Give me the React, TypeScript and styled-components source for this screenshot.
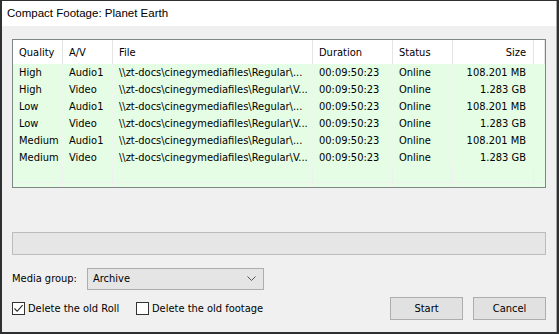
import React from "react";
import styled, { createGlobalStyle } from "styled-components";

const GlobalStyle = createGlobalStyle`
  *, *::before, *::after {
    box-sizing: border-box;
  }
  html, body {
    margin: 0;
    padding: 0;
    background: #2e3032;
  }
  body {
    width: 559px;
    height: 334px;
    overflow: hidden;
  }
`;

const Window = styled.div`
  margin: 1px 0 0 2px;
  width: 555px;
  height: 331px;
  background: #f0f0f0;
  border-right: 1px solid #a8a8a8;
  display: flex;
  flex-direction: column;
  font-family: "DejaVu Sans Condensed", "DejaVu Sans", sans-serif;
  font-stretch: condensed;
  font-size: 11px;
  color: #000;
`;

const TitleBar = styled.div`
  height: 25px;
  background: #fff;
  display: flex;
  align-items: center;
  padding: 0 0 1px 5px;
  font-family: "Liberation Sans", Arial, sans-serif;
  font-stretch: normal;
  font-size: 11.5px;
  color: #000;
`;

const Body = styled.div`
  flex: 1;
  padding: 13px 0 0 10px;
  display: flex;
  flex-direction: column;
  align-items: flex-start;
`;

const ListBox = styled.div`
  width: 534px;
  height: 149px;
  border: 1px solid #7f8688;
  background: #e4fde4;
  overflow: hidden;
`;

const Grid = styled.div`
  display: grid;
  grid-template-columns: 50px 50px 200px 80px 60px 81px 1fr;
`;

const HeadCell = styled.div<{ $right?: boolean }>`
  height: 24px;
  background: #fff;
  border-right: 1px solid #e5e5e5;
  display: flex;
  align-items: center;
  justify-content: ${(p) => (p.$right ? "flex-end" : "flex-start")};
  padding: 0 ${(p) => (p.$right ? "7px" : "0")} 0 ${(p) => (p.$right ? "0" : "6px")};
  white-space: nowrap;
  &:last-child {
    border-right: none;
  }
`;

const Cell = styled.div<{ $right?: boolean; $filler?: boolean }>`
  height: 17px;
  display: flex;
  align-items: center;
  justify-content: ${(p) => (p.$right ? "flex-end" : "flex-start")};
  padding: 0 ${(p) => (p.$right ? "7px" : "0")} 0 ${(p) => (p.$right ? "0" : "6px")};
  white-space: nowrap;
  overflow: hidden;
  border-right: 1px solid ${(p) => (p.$filler ? "#f0f0f0" : "#eef7ee")};
  border-bottom: ${(p) => (p.$filler ? "1px solid #f0f0f0" : "none")};
  &:nth-child(7n) {
    border-right: none;
  }
`;

const Progress = styled.div`
  width: 534px;
  margin-top: 44px;
  height: 23px;
  border: 1px solid #bcbcbc;
  background: #e6e6e6;
`;

const GroupRow = styled.div`
  margin-top: 13px;
  display: flex;
  align-items: center;
`;

const GroupLabel = styled.span`
  width: 75px;
  padding-bottom: 1px;
`;

const Combo = styled.div`
  width: 177px;
  height: 22px;
  border: 1px solid #adadad;
  background: #e5e5e5;
  display: flex;
  align-items: center;
  justify-content: space-between;
  padding: 0 7px 1px 5px;
`;

const BottomRow = styled.div`
  width: 534px;
  margin-top: 7px;
  display: flex;
  align-items: center;
  justify-content: space-between;
`;

const Checks = styled.div`
  display: flex;
  align-items: center;
`;

const CheckLabel = styled.label<{ $width?: number }>`
  display: flex;
  align-items: center;
  gap: 3px;
  width: ${(p) => (p.$width ? `${p.$width}px` : "auto")};
`;

const Box = styled.span`
  width: 13px;
  height: 13px;
  border: 1px solid #333;
  background: #fff;
  display: flex;
  align-items: center;
  justify-content: center;
`;

const Buttons = styled.div`
  display: flex;
  gap: 10px;
`;

const Button = styled.button`
  width: 73px;
  height: 23px;
  border: 1px solid #adadad;
  background: #e1e1e1;
  font: inherit;
  font-stretch: condensed;
  color: #000;
  padding: 0 0 1px;
`;

const columns = [
  { title: "Quality" },
  { title: "A/V" },
  { title: "File" },
  { title: "Duration" },
  { title: "Status" },
  { title: "Size", right: true },
  { title: "" },
];

const rows = [
  ["High", "Audio1", "\\\\zt-docs\\cinegymediafiles\\Regular\\...", "00:09:50:23", "Online", "108.201 MB"],
  ["High", "Video", "\\\\zt-docs\\cinegymediafiles\\Regular\\V...", "00:09:50:23", "Online", "1.283 GB"],
  ["Low", "Audio1", "\\\\zt-docs\\cinegymediafiles\\Regular\\...", "00:09:50:23", "Online", "108.201 MB"],
  ["Low", "Video", "\\\\zt-docs\\cinegymediafiles\\Regular\\V...", "00:09:50:23", "Online", "1.283 GB"],
  ["Medium", "Audio1", "\\\\zt-docs\\cinegymediafiles\\Regular\\...", "00:09:50:23", "Online", "108.201 MB"],
  ["Medium", "Video", "\\\\zt-docs\\cinegymediafiles\\Regular\\V...", "00:09:50:23", "Online", "1.283 GB"],
];

const Check = ({ checked, label, width }: { checked?: boolean; label: string; width?: number }) => (
  <CheckLabel $width={width}>
    <Box>
      {checked && (
        <svg width="11" height="11" viewBox="0 0 11 11">
          <polyline points="1.5,5.5 4.2,8.3 9.6,2.2" fill="none" stroke="#222" strokeWidth="1.1" />
        </svg>
      )}
    </Box>
    {label}
  </CheckLabel>
);

const App = () => {
  return (
    <>
      <GlobalStyle />
      <Window>
        <TitleBar>Compact Footage: Planet Earth</TitleBar>
        <Body>
          <ListBox>
            <Grid>
              {columns.map((c, i) => (
                <HeadCell key={i} $right={c.right}>
                  {c.title}
                </HeadCell>
              ))}
              {rows.map((r, ri) =>
                [...r, ""].map((v, ci) => (
                  <Cell key={`${ri}-${ci}`} $right={ci === 5}>
                    {v}
                  </Cell>
                ))
              )}
              {columns.map((_, ci) => (
                <Cell key={`f-${ci}`} $filler />
              ))}
              {columns.map((_, ci) => (
                <Cell key={`g-${ci}`} $filler />
              ))}
            </Grid>
          </ListBox>
          <Progress />
          <GroupRow>
            <GroupLabel>Media group:</GroupLabel>
            <Combo>
              <span>Archive</span>
              <svg width="9" height="5" viewBox="0 0 9 5">
                <polyline points="0.5,0.5 4.5,4.5 8.5,0.5" fill="none" stroke="#555" strokeWidth="1" />
              </svg>
            </Combo>
          </GroupRow>
          <BottomRow>
            <Checks>
              <Check checked width={124} label="Delete the old Roll" />
              <Check label="Delete the old footage" />
            </Checks>
            <Buttons>
              <Button>Start</Button>
              <Button>Cancel</Button>
            </Buttons>
          </BottomRow>
        </Body>
      </Window>
    </>
  );
};

export default App;
